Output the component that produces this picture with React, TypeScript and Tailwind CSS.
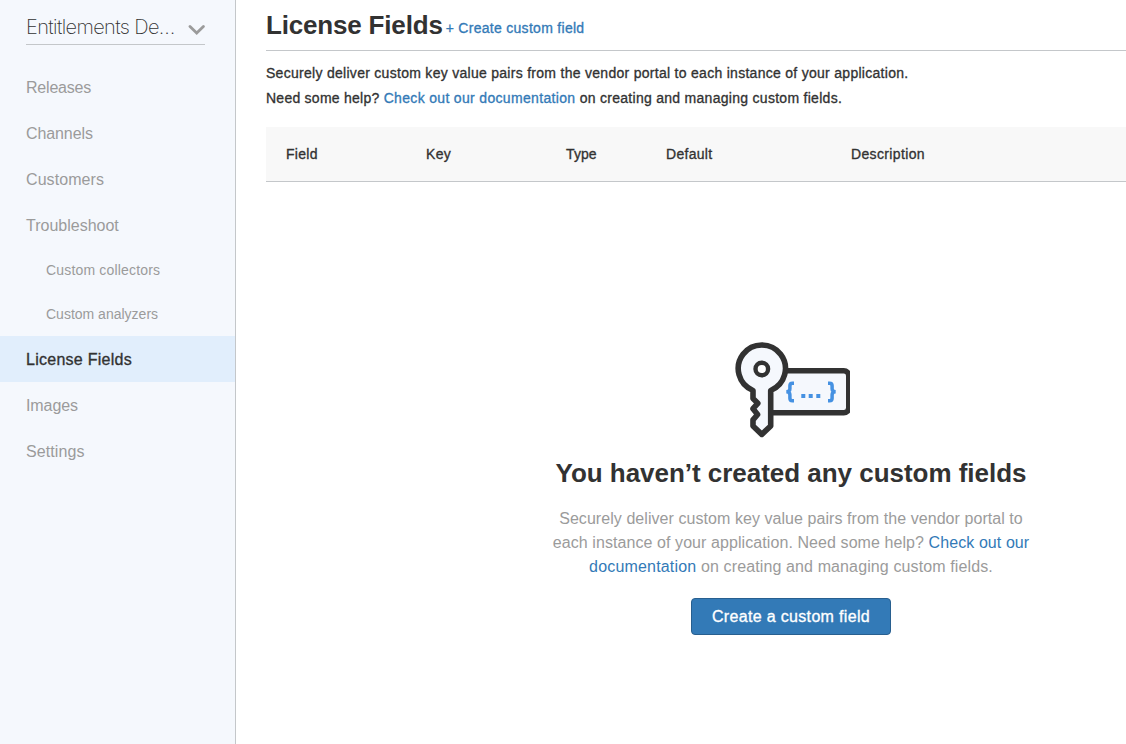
const navItems = [
  { label: "Releases", tracking: "tracking-[-0.2px]" },
  { label: "Channels", tracking: "tracking-[-0.1px]" },
  { label: "Customers", tracking: "tracking-[0.08px]" },
  { label: "Troubleshoot", tracking: "tracking-normal" },
  { label: "Custom collectors", sub: true, tracking: "tracking-[0.17px]" },
  { label: "Custom analyzers", sub: true, tracking: "tracking-normal" },
  { label: "License Fields", active: true, tracking: "tracking-[0.26px]" },
  { label: "Images", tracking: "tracking-[-0.08px]" },
  { label: "Settings", tracking: "tracking-[0.1px]" },
];

const medium = "[-webkit-text-stroke:0.32px_currentColor]";

function KeyIcon() {
  return (
    <svg width="115" height="96" viewBox="0 0 115 96" fill="#f5f8fd" stroke="#323232" strokeWidth="5.6" strokeLinejoin="round">
      <rect x="30" y="28.800" width="83.800" height="42" rx="5" />
      <path d="M18 48.500V56.500l4.800 4.800-4.800 5.400 4.600 5.800-4.600 5.400V84l8.800 8.400 8.900-8.400V48.500A23.600 23.600 0 1 0 18 48.500Z" />
      <circle cx="26.800" cy="27" r="6.300" strokeWidth="4.400" fill="#ffffff" />
      <g fill="none" stroke="#4591e2" strokeWidth="3.500" strokeLinejoin="miter">
        <path d="M59 41.200h-1.600q-2.500 0-2.500 2.500v3q0 3-3.600 3q3.600 0 3.600 3v3.500q0 2.500 2.500 2.500H59" />
        <path d="M93 41.200h1.600q2.500 0 2.500 2.500v3q0 3 3.600 3q-3.600 0-3.600 3v3.500q0 2.500-2.500 2.500H93" />
      </g>
      <path d="M66.300 52h4v4h-4zM73.700 52h4v4h-4zM81.300 52h4v4h-4z" fill="#4591e2" stroke="none" />
    </svg>
  );
}

export default function App() {
  return (
    <div className="flex h-[744px] w-full overflow-hidden bg-white font-['Liberation_Sans',sans-serif] text-[#323232]">
      <aside className="w-[236px] shrink-0 border-r border-[#c4c7ca] bg-[#f5f8fd]">
        <div className="mr-[30px] ml-[26px] flex h-[45px] items-center justify-between border-b border-[#c4c7ca] pt-[10px]">
          <span className="font-['Inter',sans-serif] text-[20px] font-extralight tracking-[-0.62px] whitespace-nowrap">Entitlements De…</span>
          <svg className="mt-[5px] shrink-0" width="17" height="12" viewBox="0 0 17 12" fill="none" stroke="#9b9b9b" strokeWidth="2.8">
            <path d="M2 2.500l6.700 6.500L15.400 2.500" strokeLinecap="round" />
          </svg>
        </div>
        <nav className="mt-[19px] flex flex-col">
          {navItems.map((item) => (
            <a
              key={item.label}
              className={`flex items-center ${item.tracking} ${
                item.sub
                  ? "h-11 pl-[46px] text-[14px] text-[#9b9b9b]"
                  : item.active
                    ? `h-[46px] bg-[#e1eefc] pt-[2px] pl-[26px] text-[16px] text-[#323232] ${medium}`
                    : "h-[46px] pt-[2px] pl-[26px] text-[16px] text-[#9b9b9b]"
              }`}
            >
              {item.label}
            </a>
          ))}
        </nav>
      </aside>
      <main className="ml-[30px] w-[1050px] shrink-0">
        <header className="flex h-[51px] items-baseline gap-1 border-b border-[#c4c7ca] pt-[10px]">
          <h1 className="text-[26px] leading-[30px] font-bold tracking-[-0.18px]">License Fields</h1>
          <a className={`relative -top-px -ml-px text-[14px] tracking-[0.29px] text-[#337ab7] ${medium}`}>+ Create custom field</a>
        </header>
        <p className={`mt-[10px] text-[14px] leading-[25px] tracking-[0.285px] ${medium}`}>
          Securely deliver custom key value pairs from the vendor portal to each instance of your application.
          <br />
          <span className="tracking-[0.25px]">Need some help? </span>
          <a className="tracking-[0.33px] text-[#337ab7]">Check out our documentation</a> on creating and managing custom fields.
        </p>
        <div className={`mt-[16px] flex h-[55px] items-center border-b border-[#c4c7ca] bg-[#f8f8f8] pl-5 text-[14px] tracking-[0.3px] ${medium}`}>
          <span className="w-[140px]">Field</span>
          <span className="w-[140px]">Key</span>
          <span className="w-[100px] tracking-[0.1px]">Type</span>
          <span className="w-[185px]">Default</span>
          <span className="tracking-[0.36px]">Description</span>
        </div>
        <section className="flex flex-col items-center pt-[160px] text-center">
          <div className="pl-[3px]">
            <KeyIcon />
          </div>
          <h2 className="mt-[20px] text-[26px] leading-[30px] font-bold tracking-[-0.03px]">You haven’t created any custom fields</h2>
          <p className="mt-[19px] text-[16px] leading-6 tracking-[0.06px] whitespace-nowrap text-[#9b9b9b]">
            Securely deliver custom key value pairs from the vendor portal to
            <br />
            <span className="tracking-[0.08px]">
              each instance of your application. Need some help? <a className="text-[#337ab7]">Check out our</a>
            </span>
            <br />
            <span className="tracking-[0.12px]">
              <a className="tracking-[0.18px] text-[#337ab7]">documentation</a> on creating and managing custom fields.
            </span>
          </p>
          <button className={`mt-[19px] h-[37px] w-[200px] rounded-[4px] border border-[#285f8f] bg-[#337ab7] text-[16px] tracking-[0.33px] text-white ${medium}`}>
            Create a custom field
          </button>
        </section>
      </main>
    </div>
  );
}
